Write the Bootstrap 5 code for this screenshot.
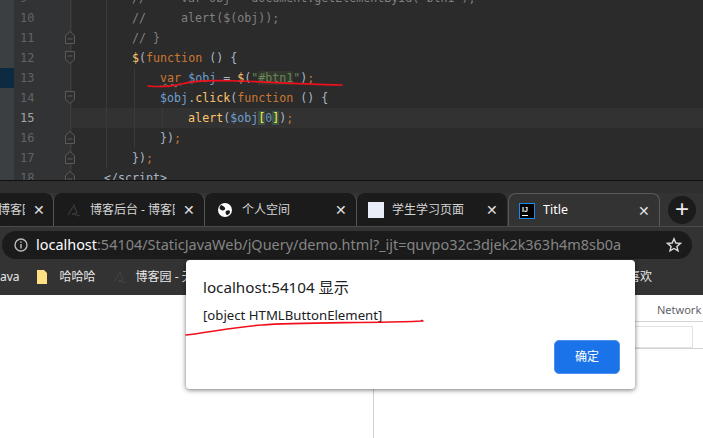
<!DOCTYPE html>
<html lang="zh"><head><meta charset="utf-8"><title>demo</title>
<link href="https://cdn.jsdelivr.net/npm/bootstrap@5.3.0/dist/css/bootstrap.min.css" rel="stylesheet">
<style>
html,body{margin:0;width:703px;height:438px;overflow:hidden;background:#fff}
body{position:relative;font-family:"Noto Sans","Noto Sans CJK SC",sans-serif}
.editor{height:180px;background:#2b2b2b;overflow:hidden;font:11.65px/20px "DejaVu Sans Mono",monospace;color:#a9b7c6;position:relative}
.lines{margin-top:-12px}
.ln{height:20px;white-space:pre}
.side{width:14px;background:#3c3f41;flex:none}
.side.on{background:#0d2b40}
.num{width:58px;background:#313335;flex:none;color:#606366;padding-left:6px;font-size:12px;position:relative}
.num.cur{color:#a4a3a3}
.fold{position:absolute;left:51px;top:3px;width:10px;height:13px}
.spine{position:absolute;left:56px;top:0;bottom:0;width:1px;background:#3d3d3d}
.code{padding-left:32px;flex:1;min-width:0;overflow:hidden}
.code.cur{background:#323232}
.cm{color:#808080}.kw{color:#cc7832}.fn{color:#ffc66d}.vn{color:#6f9fd0}.sg{color:#6a8759}.nb{color:#6897bb}
.sb{background:#32382e}.bk{background:#3b514d;color:#ffef28}
.wv{text-decoration:underline wavy #8a8a6a 1px}
.guide{position:absolute;width:1px;background:#3a3a3a}
.g1{left:106px;top:0;height:168px}.g2{left:134px;top:68px;height:80px}.g3{left:162px;top:108px;height:20px}
.strip{height:13px;background:#2f2f2f;border-top:1px solid #111}
.tabbar{height:33px;background:#333;font-size:12px;color:#d6d6d6}
.tabx{height:33px;background:#1b1b1b;flex:none;border-radius:8px 8px 0 0;padding:1px 9px 0 12px;gap:8px;border-right:1px solid #555}
.tabx .tt{flex:1;min-width:0;overflow:hidden;white-space:nowrap}
.tabx.first{width:54px;padding-left:0;padding-right:8px;border-radius:0 8px 0 0}
.tabx.first .tt{margin-left:-2px}
.tabx.w2{width:151px}.tabx.w3{width:152px;gap:9px}.tabx.w4{width:150px;border-right:0;padding-left:11px}
.tabx.act{width:152px;background:#333;border:1px solid #5a5a5a;border-bottom:0;color:#fff;margin-left:1px;padding-left:10px;padding-right:9px}
.tabx.act .tt{font-size:12.5px}
.cl{font-size:14px;line-height:1;color:#e0e0e0;flex:none}
.plus{width:28px;height:28px;border-radius:50%;background:#1b1b1b;margin-left:8px;margin-top:3px;color:#eee;font-size:24px;line-height:26px;text-align:center;font-family:"Liberation Sans",sans-serif}
.fav{width:16px;height:16px;flex:none}
.tile{background:#e8edf8}
.tbar{height:33px;background:#333;padding:4px 0 0 2px;border-top:1px solid #4a4a4a}
.omni{width:690px;height:28px;background:#1b1b1b;border-radius:14px;padding:0 10px 0 12px;font-size:14.45px;color:#858585;white-space:nowrap}
.omni b{font-weight:400;color:#fff}
.bmk{height:36px;background:#333;font-size:12px;color:#e8e8e8;white-space:nowrap;gap:8px}
.likes{margin-right:51px}
.page{height:143px;background:#fff}
.leftp{width:374px;border-right:1px solid #cfcfcf;flex:none}
.netw{height:27px;border-bottom:1px solid #d4d4d4;font-size:11px;color:#5f6368;line-height:30px;white-space:nowrap;padding-left:283px}
.filt{height:27px;border-bottom:1px solid #d4d4d4;padding:4px 10px 0 0}
.filt div{height:22px;border:1px solid #e2e2e2;margin-left:200px}
.dlg{position:absolute;left:186px;top:260px;width:449px;height:129px;background:#fff;border-radius:4px;box-shadow:0 1px 5px rgba(0,0,0,.55);padding:17px 15px 0 17px;color:#202124}
.dlg h6{font-size:15.2px;font-weight:400;margin:0 0 9px;line-height:20px;font-family:"Noto Sans","Noto Sans CJK SC",sans-serif}
.dlg p{font-size:13.2px;margin:0;line-height:18px}
.okb{width:66px;height:34px;background:#1a73e8;border:1px solid #4d8fec;border-radius:5px;color:#fff;font-size:12px;padding:0;position:absolute;right:15px;top:80px}
.pen{position:absolute;left:0;top:0;pointer-events:none}
</style></head><body>
<svg width="0" height="0" class="position-absolute"><defs>
 <g id="foldTop" fill="#2e2e2e" stroke="#5a5a5a"><path d="M.5.5h9v8L5 12.500.5 8.500z"/><path d="M2.500 5h5"/></g>
 <g id="foldEnd" fill="#2e2e2e" stroke="#5a5a5a"><path d="M.5 12.500h9v-8L5 .5.5 4.500z"/><path d="M2.500 8h5"/></g>
</defs></svg>
<div class="editor"><div class="lines">
<div class="ln d-flex"><div class="side"></div><div class="num">9<i class="spine"></i></div><div class="code cm">    //     var obj = document.getElementById("btn1");</div></div>
<div class="ln d-flex"><div class="side"></div><div class="num">10<i class="spine"></i></div><div class="code cm">    //     alert($(obj));</div></div>
<div class="ln d-flex"><div class="side"></div><div class="num">11<i class="spine"></i><svg class="fold"><use href="#foldEnd"/></svg></div><div class="code cm">    // }</div></div>
<div class="ln d-flex"><div class="side"></div><div class="num">12<i class="spine"></i><svg class="fold"><use href="#foldTop"/></svg></div><div class="code">    <span class="fn">$</span>(<span class="kw">function</span> () {</div></div>
<div class="ln d-flex"><div class="side on"></div><div class="num">13<i class="spine"></i></div><div class="code">        <span class="kw wv">var</span> <span class="vn">$obj</span> = <span class="fn">$</span>(<span class="sg">"<span class="sb">#btn1</span>"</span>)<span class="kw">;</span></div></div>
<div class="ln d-flex"><div class="side"></div><div class="num">14<i class="spine"></i><svg class="fold"><use href="#foldTop"/></svg></div><div class="code">        <span class="vn">$obj</span>.<span class="fn">click</span>(<span class="kw">function</span> () {</div></div>
<div class="ln d-flex"><div class="side"></div><div class="num cur">15<i class="spine"></i></div><div class="code cur">            <span class="fn">alert</span>(<span class="vn">$obj</span><span class="bk">[</span><span class="nb">0</span><span class="bk">]</span>)<span class="kw">;</span></div></div>
<div class="ln d-flex"><div class="side"></div><div class="num">16<i class="spine"></i><svg class="fold"><use href="#foldEnd"/></svg></div><div class="code">        })<span class="kw">;</span></div></div>
<div class="ln d-flex"><div class="side"></div><div class="num">17<i class="spine"></i><svg class="fold"><use href="#foldEnd"/></svg></div><div class="code">    })<span class="kw">;</span></div></div>
<div class="ln d-flex"><div class="side"></div><div class="num">18<i class="spine"></i><svg class="fold"><use href="#foldEnd"/></svg></div><div class="code">&lt;/script&gt;</div></div>
</div><i class="guide g1"></i><i class="guide g2"></i><i class="guide g3"></i></div>
<div class="strip"></div>
<div class="tabbar d-flex">
 <div class="tabx first d-flex align-items-center"><span class="tt">博客园</span><span class="cl">✕</span></div>
 <div class="tabx w2 d-flex align-items-center">
  <svg class="fav" viewBox="0 0 16 16" fill="none" stroke="#3a3a3a" stroke-width="1.2"><path d="M2 13 8 3l3 8-5 1 8 2"/></svg>
  <span class="tt">博客后台 - 博客园</span><span class="cl">✕</span></div>
 <div class="tabx w3 d-flex align-items-center">
  <svg class="fav" viewBox="0 0 16 16"><circle cx="8" cy="8" r="7" fill="#fff"/><path d="M4 3c2 1 3 1 4 3S6 9 4 8 2 5 4 3zM9 9c2-1 4-1 4 1s-2 3-3 3-2-3-1-4z" fill="#1b1b1b"/></svg>
  <span class="tt">个人空间</span><span class="cl">✕</span></div>
 <div class="tabx w4 d-flex align-items-center"><span class="fav tile"></span><span class="tt">学生学习页面</span><span class="cl">✕</span></div>
 <div class="tabx act d-flex align-items-center">
  <svg class="fav" viewBox="0 0 16 16"><rect x=".5" y=".5" width="15" height="15" fill="#000" stroke="#1e88f0"/><rect x="3" y="12" width="6" height="1" fill="#fff"/><text x="3" y="9" font-size="7" font-weight="700" fill="#fff" font-family="Liberation Sans">IJ</text></svg>
  <span class="tt">Title</span><span class="cl">✕</span></div>
 <div class="plus">+</div>
</div>
<div class="tbar">
 <div class="omni d-flex align-items-center">
  <svg width="14" height="14" viewBox="0 0 14 14" class="flex-none me-2"><circle cx="7" cy="7" r="6" fill="none" stroke="#bbb" stroke-width="1.4"/><rect x="6.3" y="6" width="1.4" height="4.5" fill="#bbb"/><rect x="6.3" y="3.4" width="1.4" height="1.5" fill="#bbb"/></svg>
  <span class="flex-grow-1"><b>localhost</b>:54104/StaticJavaWeb/jQuery/demo.html?_ijt=quvpo32c3djek2k363h4m8sb0a</span>
  <svg width="16" height="16" viewBox="0 0 16 16"><path d="M8 1.8 9.8 6l4.6.4-3.5 3 1.1 4.5L8 11.5l-4 2.4 1.1-4.5-3.5-3L6.200 6z" fill="none" stroke="#ddd" stroke-width="1.4"/></svg>
 </div>
</div>
<div class="bmk d-flex align-items-center overflow-hidden">
 <span>ava</span>
 <svg width="12" height="14" viewBox="0 0 12 14" class="ms-2"><path d="M1 0h7l3 3v11H1z" fill="#ffe082"/></svg>
 <span class="ms-1">哈哈哈</span>
 <svg width="16" height="16" viewBox="0 0 16 16" fill="none" stroke="#444" class="ms-2"><path d="M2 13 8 3l3 8-5 1 8 2"/></svg>
 <span>博客园 - 无</span>
 <span class="ms-auto likes">喜欢</span>
</div>
<div class="page d-flex">
 <div class="leftp"></div>
 <div class="flex-grow-1"><div class="netw">Network</div><div class="filt"><div></div></div></div>
</div>
<div class="dlg">
 <h6>localhost:54104 显示</h6>
 <p>[object HTMLButtonElement]</p>
 <button type="button" class="btn okb">确定</button>
</div>
<svg class="pen" width="703" height="438" fill="none" stroke="#f0101c" stroke-width="1.7" stroke-linecap="round">
 <path d="M148 86C160 87 170 87 181 84S215 80 240 81 300 84 342 85"/>
 <path d="M186 335C205 333 235 327 262 325S340 323 390 322 415 320 423 321"/>
</svg>
</body></html>
